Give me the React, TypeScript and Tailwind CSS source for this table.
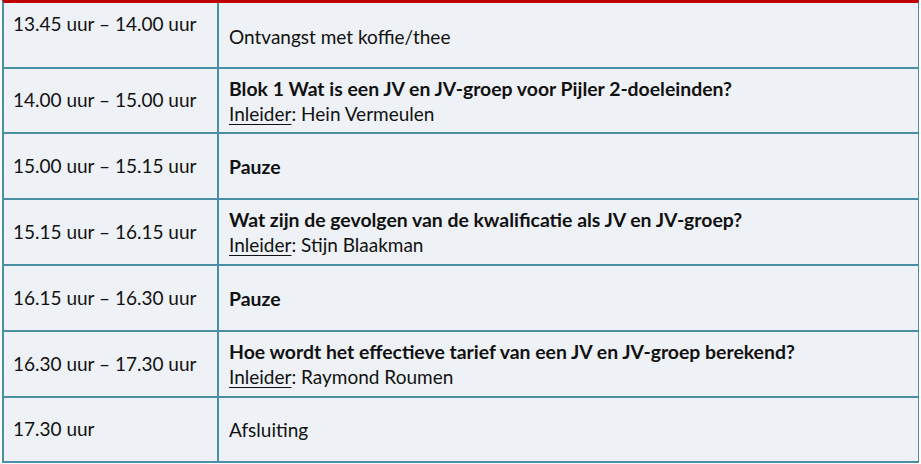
const rows = [
  { time: "13.45 uur – 14.00 uur", title: "Ontvangst met koffie/thee", bold: false, top: true, h: "h-[66px]" },
  { time: "14.00 uur – 15.00 uur", title: "Blok 1 Wat is een JV en JV-groep voor Pijler 2-doeleinden?", bold: true, speaker: "Hein Vermeulen", h: "h-[65px]" },
  { time: "15.00 uur – 15.15 uur", title: "Pauze", bold: true, h: "h-[66px]" },
  { time: "15.15 uur – 16.15 uur", title: "Wat zijn de gevolgen van de kwalificatie als JV en JV-groep?", bold: true, speaker: "Stijn Blaakman", h: "h-[66px]" },
  { time: "16.15 uur – 16.30 uur", title: "Pauze", bold: true, h: "h-[66px]" },
  { time: "16.30 uur – 17.30 uur", title: "Hoe wordt het effectieve tarief van een JV en JV-groep berekend?", bold: true, speaker: "Raymond Roumen", h: "h-[66px]" },
  { time: "17.30 uur", title: "Afsluiting", bold: false, h: "h-[65px]" },
]

export default function App() {
  return (
    <div className="w-[921px] h-[464px] bg-white pl-[2px]" style={{ fontFamily: "Lato, 'Liberation Sans', sans-serif" }}>
      <div className="w-[917px] bg-[#eef2f6] border-t-[3px] border-t-[#c00000] border-l-2 border-r border-[#4a8fa5] text-[19px] text-[#111]">
        {rows.map((r, i) => (
          <div key={i} className={`flex ${r.h} border-b-2 border-[#4a8fa5]`}>
            <div className={`w-[215px] border-r-2 border-[#4a8fa5] pl-[9px] flex ${r.top ? "items-start pt-[7px]" : "items-center"}`}>
              {r.time}
            </div>
            <div className={`flex-1 pl-[10px] flex flex-col justify-center ${r.top ? "pt-[2px]" : ""}`}>
              <div className={r.bold ? "font-bold text-[19.4px] leading-[25px]" : "leading-[25px]"}>{r.title}</div>
              {r.speaker && (
                <div className="leading-[25px]">
                  <span className="underline underline-offset-[3px]">Inleider</span>: {r.speaker}
                </div>
              )}
            </div>
          </div>
        ))}
      </div>
    </div>
  )
}
